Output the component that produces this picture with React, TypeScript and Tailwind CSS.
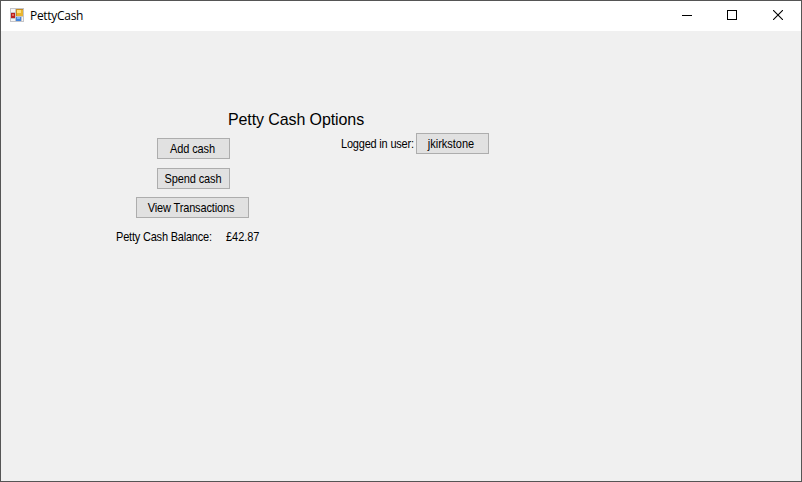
import type { ReactNode } from "react";

function FormButton({ className, children }: { className: string; children: ReactNode }) {
  return (
    <button
      className={`flex h-[21px] items-center justify-center whitespace-nowrap border border-[#adadad] bg-[#e1e1e1] pt-px ${className}`}
    >
      <span className="inline-block scale-y-[1.1]">{children}</span>
    </button>
  );
}

function FormIcon() {
  return (
    <svg className="mb-[2px]" width="14" height="14" viewBox="0 0 14 14" shapeRendering="crispEdges">
      <rect width="14" height="14" fill="#c4c4c8" />
      <path d="M1 1h4v3H1zM1 11h4v2H1z" fill="#f5f5f5" />
      <rect x="6" y="1" width="7" height="7" fill="#e9b52f" />
      <path d="M6 1h7v1H6zM6 1h1v7H6z" fill="#c88d20" />
      <rect x="7" y="2" width="4" height="3" fill="#ffe078" />
      <rect x="1" y="5" width="4" height="5" fill="#b92020" />
      <rect x="2" y="6" width="2" height="2" fill="#e56a5c" />
      <rect x="6" y="9" width="5" height="4" fill="#4384dc" />
      <rect x="7" y="9" width="3" height="2" fill="#84b7f5" />
      <rect x="12" y="9" width="1" height="4" fill="#f5f5f5" />
    </svg>
  );
}

export default function App() {
  return (
    <div className="flex h-[482px] w-[802px] flex-col border border-[#555] bg-[#f0f0f0] font-['Liberation_Sans',Arial,sans-serif] text-[11px] leading-[13px] text-black">
      <header className="flex h-[30px] shrink-0 items-center justify-between bg-white pl-[9px]">
        <div className="flex items-center gap-[6px]">
          <FormIcon />
          <span className="font-['Open_Sans','Noto_Sans',sans-serif] text-[12px] leading-4 tracking-[-0.3px]">PettyCash</span>
        </div>
        <div className="flex">
          <button aria-label="Minimize" className="flex h-[30px] w-[46px] items-center justify-center pb-[2px]">
            <svg width="10" height="10" viewBox="0 0 10 10" shapeRendering="crispEdges"><path d="M0 5h10v1H0z" /></svg>
          </button>
          <button aria-label="Maximize" className="flex h-[30px] w-[45px] items-center justify-center pr-[2px] pb-[2px]">
            <svg width="10" height="10" viewBox="0 0 10 10" fill="none" stroke="black" shapeRendering="crispEdges"><path d="M.5.5h9v9h-9z" /></svg>
          </button>
          <button aria-label="Close" className="flex h-[30px] w-[46px] items-center justify-center pb-[2px]">
            <svg width="10" height="10" viewBox="0 0 10 10" stroke="black" strokeWidth="1.1"><path d="M0 0l10 10M10 0L0 10" /></svg>
          </button>
        </div>
      </header>
      <main className="flex flex-col pt-[79px]">
        <h1 className="ml-[227px] h-[20px] w-fit origin-center scale-y-[1.05] text-[16px] leading-[20px] tracking-[-0.1px]">Petty Cash Options</h1>
        <div className="flex items-start pl-[115px]">
          <section className="flex w-[225px] flex-col pt-[8px]">
            <FormButton className="ml-[41px] w-[73px] pr-[2px] tracking-[-0.1px]">Add cash</FormButton>
            <FormButton className="ml-[41px] mt-[9px] w-[73px] pr-px tracking-[-0.1px]">Spend cash</FormButton>
            <FormButton className="ml-[20px] mt-[8px] w-[113px] pr-[3px] tracking-[-0.15px]">View Transactions</FormButton>
            <div className="mt-[13px] flex scale-y-[1.1]">
              <span className="w-[110px] tracking-[-0.2px]">Petty Cash Balance:</span>
              <span className="tracking-[-0.05px]">£42.87</span>
            </div>
          </section>
          <section className="flex items-center pt-[3px]">
            <span className="w-[75px] scale-y-[1.1] whitespace-nowrap pt-px tracking-[-0.2px]">Logged in user:</span>
            <FormButton className="w-[73px] pr-[3px]">jkirkstone</FormButton>
          </section>
        </div>
      </main>
    </div>
  );
}
